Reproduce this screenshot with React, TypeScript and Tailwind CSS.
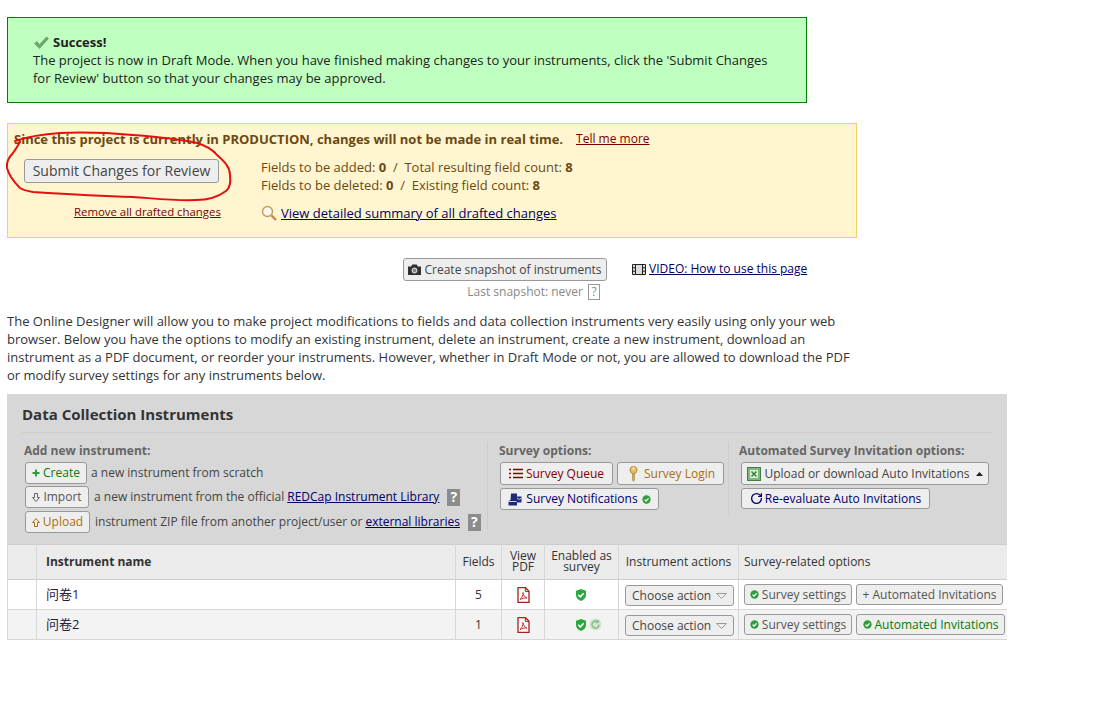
import type { ReactNode } from 'react';
import { RotateCw } from 'lucide-react';

const btn = 'inline-flex items-center rounded-[3px] border border-[#999] bg-[#eee] leading-none whitespace-nowrap';

function Dot() {
  return (
    <svg width="9" height="9" viewBox="0 0 10 10" className="shrink-0">
      <circle cx="5" cy="5" r="4.6" fill="#2f9e3a" />
      <path d="M2.8 5.1l1.6 1.6 2.9-3" stroke="#fff" strokeWidth="1.4" fill="none" />
    </svg>
  );
}

function Help({ className }: { className: string }) {
  return (
    <span className={`inline-flex h-[17px] w-[13px] items-center justify-center bg-[#8c8c8c] text-[14px] font-bold leading-none text-white ${className}`}>
      ?
    </span>
  );
}

function PdfIcon() {
  return (
    <svg width="13" height="16" viewBox="0 0 13 16" className="mx-auto">
      <path d="M1 .7h7.5L12 4.2v11.1H1z" fill="#fff" stroke="#a5211c" strokeWidth="1.3" />
      <path d="M8.3 1v3.4H12" fill="none" stroke="#a5211c" />
      <path d="M3 12.5c1.6-1 3-4 3-7 .4 3 1.600 4.800 4 5.500-2.600-.2-5 .3-7 1.500z" fill="none" stroke="#c8332c" />
    </svg>
  );
}

function ShieldIcon() {
  return (
    <svg width="12" height="14" viewBox="0 0 12 13" className="shrink-0">
      <path d="M6 .5l5 1.700v4.300c0 3-2.200 5-5 6-2.800-1-5-3-5-6V2.200z" fill="#2aa83c" />
      <path d="M3.300 6.300l2 2 3.400-3.600" stroke="#fff" strokeWidth="1.600" fill="none" />
    </svg>
  );
}

function ChooseAction() {
  return (
    <span className={`${btn} h-[21px] w-[109px] justify-between px-[6px] text-[12px] text-[#444]`}>
      Choose action
      <svg width="11" height="6" viewBox="0 0 11 6">
        <path d="M.5.500h10L5.500 5.500z" fill="none" stroke="#999" />
      </svg>
    </span>
  );
}

function OptionButton({ children, className }: { children: ReactNode; className: string }) {
  return <span className={`${btn} h-[21px] justify-center gap-[3px] text-[12px] ${className}`}>{children}</span>;
}

const rows = [
  { name: '问卷1', fields: 5, rowClass: 'bg-white', repeat: false },
  { name: '问卷2', fields: 1, rowClass: 'bg-[#f3f3f3]', repeat: true },
];

export default function App() {
  return (
    <div className="relative min-h-[702px] w-[1117px] overflow-hidden bg-white pl-[7px] pt-[17px] font-['Open_Sans',sans-serif] text-[13px] leading-[18px] text-[#333]">
      {/* Success message */}
      <div className="h-[86px] w-[800px] border border-[#008000] bg-[#bfffbf] pl-[25px] pr-[30px] pt-[15px] text-[#222]">
        <div className="flex items-center gap-[4px] pl-px font-bold">
          <svg width="15" height="13" viewBox="0 0 15 13">
            <path d="M.5 7.500l2.500-2 2.500 3L12.500 1l2 1.500L5.500 12.500z" fill="#6fa56f" stroke="#4f8a4f" strokeWidth=".5" />
          </svg>
          Success!
        </div>
        <p>The project is now in Draft Mode. When you have finished making changes to your instruments, click the 'Submit Changes for Review' button so that your changes may be approved.</p>
      </div>

      {/* Draft mode box */}
      <div className="mt-[20px] h-[115px] w-[850px] border border-[#f5d25a] bg-[#fff5d0] pl-[6px] pt-[6px] text-[#6b4a12]">
        <div className="flex items-center">
          <b>Since this project is currently in PRODUCTION, changes will not be made in real time.</b>
          <a className="ml-[13px] text-[12px] text-[#800000] underline">Tell me more</a>
        </div>
        <div className="mt-[10px] flex">
          <div className="w-[247px] shrink-0">
            <span className={`${btn} ml-[10px] mt-px h-[24px] w-[195px] justify-center text-[14px] text-[#444]`}>Submit Changes for Review</span>
            <a className="ml-[60px] mt-[20px] block text-[11.4px] text-[#800000] underline">Remove all drafted changes</a>
          </div>
          <div>
            <div>Fields to be added: <b>0</b> &nbsp;/&nbsp; Total resulting field count: <b>8</b></div>
            <div>Fields to be deleted: <b>0</b> &nbsp;/&nbsp; Existing field count: <b>8</b></div>
            <div className="mt-[10px] flex items-center gap-[4px]">
              <svg width="16" height="16" viewBox="0 0 16 16">
                <circle cx="6.500" cy="6.500" r="5" fill="#fbf7ea" stroke="#c59a62" strokeWidth="1.400" />
                <path d="M10.500 10.500l4.500 4.500" stroke="#c08a4a" strokeWidth="2.400" />
              </svg>
              <a className="text-[#000066] underline">View detailed summary of all drafted changes</a>
            </div>
          </div>
        </div>
      </div>

      {/* Snapshot */}
      <div className="ml-[396px] mt-[20px] flex w-[420px] items-start">
        <div className="w-[204px] shrink-0">
          <span className={`${btn} h-[23px] w-[204px] justify-center gap-[3px] text-[12px] text-[#444]`}>
            <svg width="13" height="11" viewBox="0 0 13 11">
              <path d="M0 2.500h3.200L4.200.5h4.600l1 2H13V11H0z" fill="#2f2f2f" />
              <circle cx="6.500" cy="6.500" r="2.500" fill="#888" stroke="#eee" />
            </svg>
            Create snapshot of instruments
          </span>
          <div className="mt-[2px] flex items-center justify-end gap-[5px] pr-[7px] text-[12px] text-[#888]">
            Last snapshot: never
            <span className="flex h-[16px] w-[12px] items-center justify-center border border-[#999] text-[12px] leading-none">?</span>
          </div>
        </div>
        <div className="ml-[25px] mt-[2px] flex items-center gap-[3px] text-[12px] text-[#000066]">
          <svg width="14" height="11" viewBox="0 0 14 11">
            <path d="M.5.500h13v10H.5z" fill="#ddd" stroke="#222" />
            <path d="M3.500.5v10M10.500.5v10M.5 3.800h3M.5 7.200h3M10.500 3.800h3M10.500 7.200h3" fill="none" stroke="#222" />
          </svg>
          <a className="underline">VIDEO: How to use this page</a>
        </div>
      </div>

      <p className="mt-[11px] w-[850px]">
        The Online Designer will allow you to make project modifications to fields and data collection instruments very easily using only your web browser. Below you have the options to modify an existing instrument, delete an instrument, create a new instrument, download an instrument as a PDF document, or reorder your instruments. However, whether in Draft Mode or not, you are allowed to download the PDF or modify survey settings for any instruments below.
      </p>

      {/* Instruments panel */}
      <div className="mt-[10px] w-[1000px] bg-[#d7d7d7]">
        <div className="px-[15px] pt-[10px]">
          <h2 className="border-b border-[#ccc] pb-[7px] text-[15px] font-bold leading-[21px] text-[#333]">Data Collection Instruments</h2>
        </div>
        <div className="flex h-[111px] pl-[17px] pt-[9px] text-[12px]">
          <div className="h-[88px] w-[464px] shrink-0 border-r border-[#ccc]">
            <div className="font-bold text-[#666]">Add new instrument:</div>
            <div className="mt-px flex h-[24px] items-center">
              <span className={`${btn} ml-px h-[22px] w-[62px] justify-center gap-[3px] text-[#008000]`}>
                <svg width="8" height="8" viewBox="0 0 8 8"><path d="M3 .5h2v2.500h2.500v2H5v2.500H3V5H.5V3H3z" fill="#2f9e3a" /></svg>
                Create
              </span>
              <span className="ml-[4px] text-[#444]">a new instrument from scratch</span>
            </div>
            <div className="flex h-[24px] items-center">
              <span className={`${btn} ml-px h-[22px] w-[64px] justify-center gap-[3px] text-[#555]`}>
                <svg width="8" height="9" viewBox="0 0 8 9"><path d="M2.500.5h3v4h2L4 8.500.5 4.500h2z" fill="#eee" stroke="#666" /></svg>
                Import
              </span>
              <span className="ml-[5px] text-[#444]">a new instrument from the official</span>
              <a className="ml-[3px] text-[#000066] underline">REDCap Instrument Library</a>
              <Help className="ml-[8px]" />
            </div>
            <div className="mt-px flex h-[24px] items-center">
              <span className={`${btn} ml-px h-[22px] w-[65px] justify-center gap-[3px] text-[#a8700f]`}>
                <svg width="8" height="9" viewBox="0 0 8 9"><path d="M2.500 8.500h3v-4h2L4 .5.500 4.500h2z" fill="#eee" stroke="#a8700f" /></svg>
                Upload
              </span>
              <span className="ml-[5px] text-[#444]">instrument ZIP file from another project/user or</span>
              <a className="ml-[3px] text-[#000066] underline">external libraries</a>
              <Help className="ml-[8px]" />
            </div>
          </div>
          <div className="h-[72px] w-[241px] shrink-0 border-r border-[#ccc] pl-[12px]">
            <div className="-ml-px font-bold text-[#666]">Survey options:</div>
            <div className="mt-[2px] flex gap-[4px]">
              <span className={`${btn} h-[23px] w-[113px] justify-center gap-[3px] text-[#800000]`}>
                <svg width="14" height="11" viewBox="0 0 14 11">
                  <path d="M0 1.500h2M0 5.500h2M0 9.500h2M4 1.500h10M4 5.500h10M4 9.500h10" stroke="#800000" strokeWidth="1.300" />
                </svg>
                Survey Queue
              </span>
              <span className={`${btn} h-[23px] w-[107px] gap-[6px] pl-[11px] text-[#a8700f]`}>
                <svg width="9" height="16" viewBox="0 0 9 16">
                  <circle cx="4.500" cy="4" r="3.600" fill="#e3bd62" stroke="#a8832f" strokeWidth=".8" />
                  <circle cx="4.500" cy="2.600" r="1" fill="#fff" />
                  <path d="M3.500 7.500h2V14L4.500 15.500 3.500 14z" fill="#d4a94c" stroke="#a8832f" strokeWidth=".6" />
                </svg>
                Survey Login
              </span>
            </div>
            <span className={`${btn} mt-[3px] h-[22px] w-[159px] justify-center gap-[4px] text-[#000066]`}>
              <svg width="14" height="13" viewBox="0 0 14 13">
                <path d="M3 .5h6v3h4.500v6H9v3H.5V8l2-1z" fill="#1f2a78" />
                <path d="M9 5l2.200 1.500L13.500 5M.5 8.500h8" stroke="#fff" strokeWidth=".8" fill="none" />
              </svg>
              Survey Notifications
              <Dot />
            </span>
          </div>
          <div className="flex shrink-0 flex-col items-start pl-[12px]">
            <div className="-ml-[2px] font-bold text-[#666]">Automated Survey Invitation options:</div>
            <span className={`${btn} mt-[2px] h-[23px] w-[248px] justify-center gap-[3px] text-[#444]`}>
              <svg width="14" height="14" viewBox="0 0 14 14">
                <rect x=".5" y=".5" width="13" height="13" fill="#7fb77f" stroke="#3f7f3f" />
                <rect x="3" y="3" width="8" height="8" fill="#dff0d8" />
                <path d="M4.500 4.500l5 5M9.500 4.500l-5 5" stroke="#2f7f3f" strokeWidth="1.500" />
              </svg>
              Upload or download Auto Invitations
              <svg width="7" height="4" viewBox="0 0 7 4" className="ml-[3px]"><path d="M0 4h7L3.500 0z" fill="#222" /></svg>
            </span>
            <span className={`${btn} mt-[3px] h-[21px] w-[189px] justify-center gap-[2px] text-[#000066]`}>
              <RotateCw size={13} strokeWidth={2.400} color="#000066" />
              Re-evaluate Auto Invitations
            </span>
          </div>
        </div>

        <table className="w-full table-fixed border-collapse text-[12px] text-[#333]">
          <colgroup>
            <col className="w-[29px]" />
            <col className="w-[419px]" />
            <col className="w-[46px]" />
            <col className="w-[43px]" />
            <col className="w-[74px]" />
            <col className="w-[120px]" />
            <col />
          </colgroup>
          <thead>
            <tr className="h-[35px] border-y border-[#ccc] bg-[#ebebeb] text-center font-normal leading-[11px]">
              <th className="border-r border-[#d7d7d7]" />
              <th className="border-r border-[#d7d7d7] pb-[2px] pl-[9px] text-left font-bold">Instrument name</th>
              <th className="border-r border-[#d7d7d7] pb-[2px] font-normal">Fields</th>
              <th className="border-r border-[#d7d7d7] pb-[2px] font-normal">View<br />PDF</th>
              <th className="border-r border-[#d7d7d7] pb-[2px] font-normal">Enabled as<br />survey</th>
              <th className="border-r border-[#d7d7d7] pb-[2px] font-normal">Instrument actions</th>
              <th className="pb-[2px] pl-[5px] text-left font-normal">Survey-related options</th>
            </tr>
          </thead>
          <tbody>
            {rows.map((row) => (
              <tr key={row.name} className={`h-[30px] border-b border-[#d7d7d7] ${row.rowClass}`}>
                <td className="border-x border-[#d7d7d7]" />
                <td className="border-r border-[#d7d7d7] pb-[2px] pl-[9px] font-['Open_Sans','Noto_Sans_CJK_SC',sans-serif] text-[13px] text-[#222244]">{row.name}</td>
                <td className="border-r border-[#d7d7d7] text-center text-[#333]">{row.fields}</td>
                <td className="border-r border-[#d7d7d7]"><PdfIcon /></td>
                <td className="border-r border-[#d7d7d7]">
                  <div className="flex items-center gap-[2px] pl-[30px]">
                    <ShieldIcon />
                    {row.repeat && (
                      <svg width="13" height="13" viewBox="0 0 13 13" className="shrink-0">
                        <circle cx="6.500" cy="6.500" r="6" fill="#cfe6cf" />
                        <path d="M10 6.500a3.500 3.500 0 1 1-1.200-2.600M9 1.800v2.500H6.500" fill="none" stroke="#8cc08c" strokeWidth="1.600" />
                      </svg>
                    )}
                  </div>
                </td>
                <td className="border-r border-[#d7d7d7] pl-[6px] pt-[2px]"><ChooseAction /></td>
                <td className="pl-[5px]">
                  <div className="flex gap-[4px]">
                    <OptionButton className="w-[108px] text-[#555]"><Dot />Survey settings</OptionButton>
                    {row.repeat ? (
                      <OptionButton className="w-[149px] text-[#008000]"><Dot />Automated Invitations</OptionButton>
                    ) : (
                      <OptionButton className="w-[147px] text-[#555]">+ Automated Invitations</OptionButton>
                    )}
                  </div>
                </td>
              </tr>
            ))}
          </tbody>
        </table>
      </div>

      {/* Hand-drawn annotation */}
      <svg className="pointer-events-none absolute left-0 top-0" width="240" height="210" viewBox="0 0 240 210">
        <path
          d="M15 141C30 136 45 134 60 133C85 132 110 133 133 135C160 137 180 139 197 143C207 146 213 150 217 155C224 161 230 167 230 175C231 183 230 188 226 191C218 197 208 200 196 200C175 201 150 198 133 197C100 196 65 194 33 192C27 191 23 190 20 188C14 182 9 176 7 168C6 161 9 157 13 153C16 149 18 145 20 142"
          fill="none"
          stroke="#e60f0f"
          strokeWidth="2"
          strokeLinecap="round"
        />
      </svg>
    </div>
  );
}
